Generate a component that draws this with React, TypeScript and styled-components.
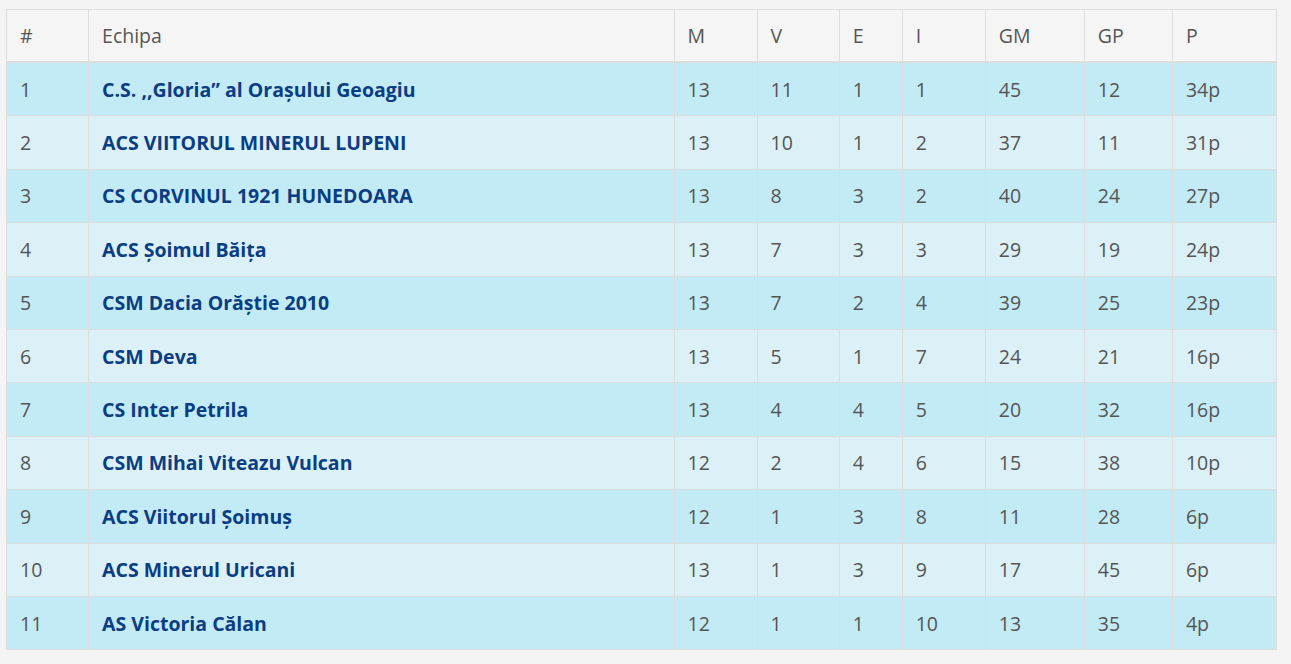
import React from "react";
import styled, { createGlobalStyle } from "styled-components";

interface TeamRow {
  pos: number;
  team: string;
  m: number;
  v: number;
  e: number;
  i: number;
  gm: number;
  gp: number;
  p: number;
}

const rows: TeamRow[] = [
  { pos: 1, team: "C.S. ,,Gloria” al Orașului Geoagiu", m: 13, v: 11, e: 1, i: 1, gm: 45, gp: 12, p: 34 },
  { pos: 2, team: "ACS VIITORUL MINERUL LUPENI", m: 13, v: 10, e: 1, i: 2, gm: 37, gp: 11, p: 31 },
  { pos: 3, team: "CS CORVINUL 1921 HUNEDOARA", m: 13, v: 8, e: 3, i: 2, gm: 40, gp: 24, p: 27 },
  { pos: 4, team: "ACS Șoimul Băița", m: 13, v: 7, e: 3, i: 3, gm: 29, gp: 19, p: 24 },
  { pos: 5, team: "CSM Dacia Orăștie 2010", m: 13, v: 7, e: 2, i: 4, gm: 39, gp: 25, p: 23 },
  { pos: 6, team: "CSM Deva", m: 13, v: 5, e: 1, i: 7, gm: 24, gp: 21, p: 16 },
  { pos: 7, team: "CS Inter Petrila", m: 13, v: 4, e: 4, i: 5, gm: 20, gp: 32, p: 16 },
  { pos: 8, team: "CSM Mihai Viteazu Vulcan", m: 12, v: 2, e: 4, i: 6, gm: 15, gp: 38, p: 10 },
  { pos: 9, team: "ACS Viitorul Șoimuș", m: 12, v: 1, e: 3, i: 8, gm: 11, gp: 28, p: 6 },
  { pos: 10, team: "ACS Minerul Uricani", m: 13, v: 1, e: 3, i: 9, gm: 17, gp: 45, p: 6 },
  { pos: 11, team: "AS Victoria Călan", m: 12, v: 1, e: 1, i: 10, gm: 13, gp: 35, p: 4 },
];

const columns = [
  { label: "#", width: 82 },
  { label: "Echipa", width: 585 },
  { label: "M", width: 83 },
  { label: "V", width: 82 },
  { label: "E", width: 63 },
  { label: "I", width: 83 },
  { label: "GM", width: 99 },
  { label: "GP", width: 88 },
  { label: "P", width: 104 },
];

const GlobalStyle = createGlobalStyle`
  html, body {
    margin: 0;
    padding: 0;
    background: #f4f4f4;
  }
  body {
    font-family: "Open Sans", "DejaVu Sans", sans-serif;
  }
`;

const Page = styled.div`
  padding: 9px 14px 14px 6px;
`;

const Table = styled.table`
  width: 1271px;
  table-layout: fixed;
  border-collapse: collapse;
  border: 1px solid #dddddd;
`;

const HeadCell = styled.th`
  height: 51px;
  padding: 0 12px 0 13px;
  text-align: left;
  vertical-align: middle;
  font-weight: 400;
  font-size: 19.5px;
  color: #555555;
  background: #f5f5f5;
  border: 1px solid #dddddd;
  border-bottom-width: 2px;
`;

const Row = styled.tr<{ $odd: boolean }>`
  background: ${(p) => (p.$odd ? "#c3ebf5" : "#dbf1f7")};
`;

const Cell = styled.td`
  height: 52.4px;
  padding: 0 12px 0 13px;
  vertical-align: middle;
  font-size: 19.5px;
  color: #555555;
  border: 1px solid #dddddd;
  white-space: nowrap;
`;

const TeamName = styled.strong`
  font-weight: 700;
  color: #0b3d83;
`;

export default function App() {
  return (
    <>
      <GlobalStyle />
      <Page>
        <Table>
          <colgroup>
            {columns.map((c) => (
              <col key={c.label} style={{ width: c.width }} />
            ))}
          </colgroup>
          <thead>
            <tr>
              {columns.map((c) => (
                <HeadCell key={c.label}>{c.label}</HeadCell>
              ))}
            </tr>
          </thead>
          <tbody>
            {rows.map((r, idx) => (
              <Row key={r.pos} $odd={idx % 2 === 0}>
                <Cell>{r.pos}</Cell>
                <Cell>
                  <TeamName>{r.team}</TeamName>
                </Cell>
                <Cell>{r.m}</Cell>
                <Cell>{r.v}</Cell>
                <Cell>{r.e}</Cell>
                <Cell>{r.i}</Cell>
                <Cell>{r.gm}</Cell>
                <Cell>{r.gp}</Cell>
                <Cell>{r.p}p</Cell>
              </Row>
            ))}
          </tbody>
        </Table>
      </Page>
    </>
  );
}
